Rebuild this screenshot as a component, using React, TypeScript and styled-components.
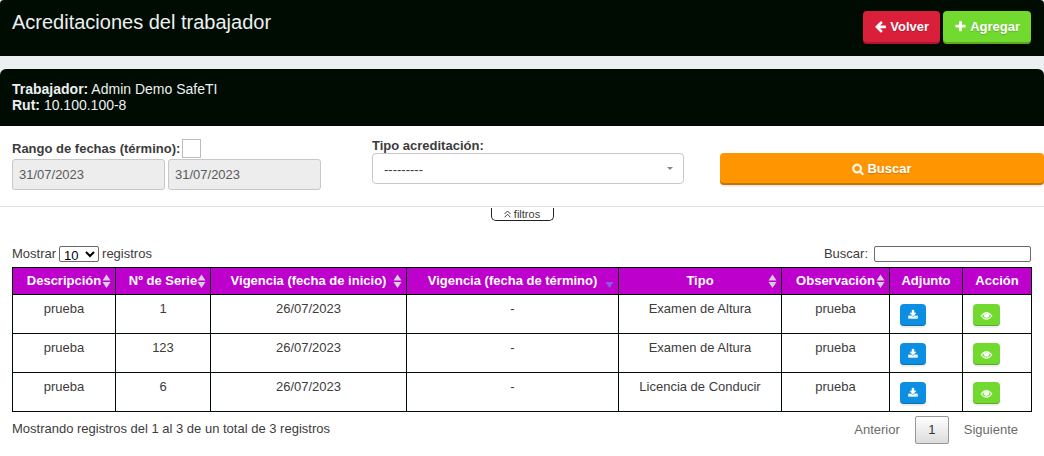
import React from "react";
import styled, { createGlobalStyle, css } from "styled-components";

const GlobalStyle = createGlobalStyle`
  *, *::before, *::after { box-sizing: border-box; }
  body {
    margin: 0;
    background: #fff;
    color: #3c3c3c;
    font: 13px/16px "Liberation Sans", Arial, sans-serif;
  }
  button, input, select { font-family: inherit; font-size: 13px; }
`;

const Page = styled.main`
  background: #ecf0f1;
  display: flex;
  flex-direction: column;
  gap: 13px;
`;

const headerBlock = css`
  background: #000b02;
  color: #ecf0f1;
  padding: 11px 12px;
`;

const TitleBar = styled.header`
  ${headerBlock}
  border-radius: 4px 4px 0 0;
  padding-right: 13px;
  display: flex;
  justify-content: space-between;
  align-items: flex-start;
  min-height: 56px;
`;

const Title = styled.h1`
  margin: 0;
  font-size: 20px;
  line-height: 22px;
  font-weight: normal;
`;

const ButtonGroup = styled.div`
  display: flex;
  gap: 3px;
`;

const tones = {
  red: "#da1f3b",
  green: "#72d92f",
  orange: "#ff9500",
  blue: "#0c8fe2",
};

const Button = styled.button<{ $tone: keyof typeof tones; $block?: boolean; $small?: boolean }>`
  display: inline-flex;
  align-items: center;
  justify-content: center;
  gap: 3px;
  width: ${(p) => (p.$block ? "100%" : "auto")};
  height: ${(p) => (p.$small ? "22px" : p.$block ? "32px" : "33px")};
  padding: ${(p) => (p.$small ? "0 8px" : p.$block ? "0 11px" : "0 11px 2px")};
  border: 0;
  border-radius: 4px;
  background: ${(p) => tones[p.$tone]};
  color: #fff;
  font-weight: bold;
  line-height: 16px;
  text-shadow: 0 1px 1px rgba(0, 0, 0, 0.2);
  box-shadow: inset 0 ${(p) => (p.$small ? "-1px" : "-2px")} 0 rgba(0, 0, 0, 0.22),
    0 2px 1px rgba(0, 0, 0, 0.07);
  cursor: pointer;
`;

const Panel = styled.section`
  background: #fff;
`;

const WorkerInfo = styled.header`
  ${headerBlock}
  border-radius: 6px 6px 0 0;
  padding-top: 12px;
  padding-bottom: 13px;
  font-size: 14px;
`;

/* The rounded corners of the worker header show the page colour behind them. */
const WorkerWrap = styled.div`
  background: #ecf0f1;
`;

const Filters = styled.form`
  display: grid;
  grid-template-columns: 30fr 29fr 27fr;
  padding: 12px 0 16px 12px;
  border-bottom: 1px solid #e2e2e2;
`;

const Field = styled.div`
  padding-right: 36px;
`;

const FieldLabel = styled.label`
  display: block;
  font-weight: bold;
  line-height: 15px;
`;

const CheckLabel = styled.label`
  display: flex;
  align-items: center;
  gap: 2px;
  height: 21px;
  font-weight: bold;
  line-height: 16px;
`;

const Checkbox = styled.input`
  appearance: none;
  width: 19px;
  height: 19px;
  margin: 0;
  border: 1px solid #bdbdc0;
  background: #fff;
`;

const DateRow = styled.div`
  display: flex;
  gap: 3px;
`;

const DateInput = styled.input`
  flex: 0 1 153px;
  min-width: 0;
  height: 31px;
  padding: 0 6px;
  border: 1px solid #c8c8c8;
  border-radius: 3px;
  background: #ededed;
  color: #5a5a5a;
`;

const SelectBox = styled.div`
  display: grid;
  align-items: center;
  & > * { grid-area: 1 / 1; }
  & > svg { justify-self: end; margin-right: 11px; pointer-events: none; }
`;

const TypeSelect = styled.select`
  appearance: none;
  width: 100%;
  height: 31px;
  padding: 2px 11px 0;
  border: 1px solid #c8c8c8;
  border-radius: 4px;
  background: #fff;
  color: #3c3c3c;
`;

const Submit = styled.div`
  padding-top: 15px;
`;

const TabRow = styled.div`
  display: flex;
  justify-content: center;
  padding-top: 1px;
`;

const FilterTab = styled.button`
  display: flex;
  align-items: center;
  justify-content: center;
  gap: 3px;
  width: 63px;
  height: 13px;
  padding: 0;
  border: 1px solid #222;
  border-top: 0;
  border-radius: 0 0 5px 5px;
  background: #fff;
  color: #3c3c3c;
  && { font-size: 11px; }
  line-height: 12px;
`;

const Records = styled.div`
  padding: 25px 12px 12px;
`;

const Bar = styled.div`
  display: flex;
  justify-content: space-between;
  align-items: center;
  padding-right: 1px;
`;

const InlineLabel = styled.label<{ $gap: number }>`
  display: flex;
  align-items: center;
  gap: ${(p) => p.$gap}px;
`;

const LengthSelect = styled.select`
  width: 40px;
  height: 16px;
  color: #000;
  padding: 0;
  line-height: 14px;
  border: 1px solid #6b6b6b;
  border-radius: 2px;
  background: #fff;
`;

const SearchInput = styled.input`
  width: 157px;
  height: 16px;
  padding: 0 2px;
  border: 1px solid #6b6b6b;
  border-radius: 2px;
`;

const Table = styled.table`
  width: 100%;
  margin-top: 5px;
  border-collapse: collapse;
  table-layout: fixed;
`;

const Th = styled.th<{ $sortable?: boolean }>`
  height: 27px;
  padding: ${(p) => (p.$sortable ? "0 12px" : "0")};
  border: 1px solid #000b02;
  background: #be00cd;
  color: #fff;
  position: relative;
  white-space: nowrap;
`;

const SortMark = styled.svg`
  position: absolute;
  right: 4px;
  top: 6px;
`;

const Td = styled.td<{ $action?: boolean }>`
  height: 39px;
  padding: ${(p) => (p.$action ? "9px 10px 7px" : "6px 10px")};
  border: 1px solid #000b02;
  text-align: ${(p) => (p.$action ? "left" : "center")};
  vertical-align: top;
  & > button { vertical-align: top; }
`;

const Footer = styled(Bar)`
  align-items: flex-start;
  padding-top: 4px;
`;

const Info = styled.p`
  margin: 5px 0 0;
`;

const Pager = styled.nav`
  display: flex;
  gap: 2px;
`;

const PageButton = styled.button<{ $current?: boolean }>`
  min-width: 34px;
  height: 28px;
  padding: 0 12px 1px;
  border: 1px solid ${(p) => (p.$current ? "#979797" : "transparent")};
  border-radius: 2px;
  background: ${(p) => (p.$current ? "linear-gradient(#fff, #dcdcdc)" : "transparent")};
  color: ${(p) => (p.$current ? "#333" : "#6b6b6b")};
`;

const paths = {
  back: "M1664 896v128q0 53-32.5 90.5t-84.5 37.5h-704l293 294q38 36 38 90t-38 90l-75 76q-37 37-90 37-52 0-91-37l-651-652q-37-37-37-90 0-52 37-91l651-650q38-38 91-38 52 0 90 38l75 74q38 38 38 91t-38 91l-293 293h704q52 0 84.5 37.5t32.5 90.5z",
  plus: "M1600 736v192q0 40-28 68t-68 28h-416v416q0 40-28 68t-68 28h-192q-40 0-68-28t-28-68v-416h-416q-40 0-68-28t-28-68v-192q0-40 28-68t68-28h416v-416q0-40 28-68t68-28h192q40 0 68 28t28 68v416h416q40 0 68 28t28 68z",
  search: "M1216 832q0-185-131.5-316.5t-316.5-131.5-316.5 131.5-131.5 316.5 131.5 316.5 316.5 131.5 316.5-131.5 131.5-316.5zm512 832q0 52-38 90t-90 38q-54 0-90-38l-343-342q-179 124-399 124-143 0-273.5-55.5t-225-150-150-225-55.5-273.5 55.5-273.5 150-225 225-150 273.5-55.5 273.5 55.5 225 150 150 225 55.5 273.5q0 220-124 399l343 343q37 37 37 90z",
  download: "M1344 1344q0-26-19-45t-45-19-45 19-19 45 19 45 45 19 45-19 19-45zm256 0q0-26-19-45t-45-19-45 19-19 45 19 45 45 19 45-19 19-45zm128-224v320q0 40-28 68t-68 28h-1472q-40 0-68-28t-28-68v-320q0-40 28-68t68-28h465l135 136q58 56 136 56t136-56l136-136h464q40 0 68 28t28 68zm-325-569q17 41-14 70l-448 448q-18 19-45 19t-45-19l-448-448q-31-29-14-70 17-39 59-39h256v-448q0-26 19-45t45-19h256q26 0 45 19t19 45v448h256q42 0 59 39z",
  eye: "M1664 960q-152-236-381-353 61 104 61 225 0 185-131.5 316.5t-316.5 131.5-316.5-131.5-131.5-316.5q0-121 61-225-229 117-381 353 133 205 333.5 326.5t434.5 121.5 434.5-121.5 333.5-326.5zm-720-384q0-20-14-34t-34-14q-125 0-214.5 89.5t-89.5 214.5q0 20 14 34t34 14 34-14 14-34q0-86 61-147t147-61q20 0 34-14t14-34zm848 384q0 34-20 69-140 230-376.5 368.5t-499.5 138.5-499.5-139-376.5-368q-20-35-20-69t20-69q140-229 376.5-368t499.5-139 499.5 139 376.5 368q20 35 20 69z",
};

const Icon = ({ name, size = 13 }: { name: keyof typeof paths; size?: number }) => (
  <svg
    width={size}
    height={size}
    viewBox="0 0 1792 1792"
    fill="currentColor"
    stroke="currentColor"
    strokeWidth={name === "back" || name === "plus" ? 0 : 60}
    overflow="visible"
    aria-hidden="true"
  >
    <path d={paths[name]} />
  </svg>
);

const SortIcon = ({ state }: { state: "both" | "desc" }) => (
  <SortMark width="9" height="15" viewBox="0 0 9 15" aria-hidden="true">
    {state === "both" && <path d="M4.5 0.5L8.5 6.5h-8z" fill="#d4d0dc" />}
    <path d="M0.5 8h8L4.5 14z" fill={state === "both" ? "#d4d0dc" : "#8a5ce0"} />
  </SortMark>
);

type Column = { title: string; width: number; sort?: "both" | "desc" };

const columns: Column[] = [
  { title: "Descripción", width: 103, sort: "both" },
  { title: "Nº de Serie", width: 95, sort: "both" },
  { title: "Vigencia (fecha de inicio)", width: 196, sort: "both" },
  { title: "Vigencia (fecha de término)", width: 212, sort: "desc" },
  { title: "Tipo", width: 163, sort: "both" },
  { title: "Observación", width: 108, sort: "both" },
  { title: "Adjunto", width: 73 },
  { title: "Acción", width: 69 },
];

const rows = [
  ["prueba", "1", "26/07/2023", "-", "Examen de Altura", "prueba"],
  ["prueba", "123", "26/07/2023", "-", "Examen de Altura", "prueba"],
  ["prueba", "6", "26/07/2023", "-", "Licencia de Conducir", "prueba"],
];

export default function App() {
  return (
    <>
      <GlobalStyle />
      <Page>
        <TitleBar>
          <Title>Acreditaciones del trabajador</Title>
          <ButtonGroup>
            <Button type="button" $tone="red"><Icon name="back" />Volver</Button>
            <Button type="button" $tone="green"><Icon name="plus" />Agregar</Button>
          </ButtonGroup>
        </TitleBar>

        <Panel>
          <WorkerWrap>
            <WorkerInfo>
              <div><b>Trabajador:</b> Admin Demo SafeTI</div>
              <div><b>Rut:</b> 10.100.100-8</div>
            </WorkerInfo>
          </WorkerWrap>

          <Filters onSubmit={(e) => e.preventDefault()}>
            <Field>
              <CheckLabel>
                Rango de fechas (término):
                <Checkbox type="checkbox" />
              </CheckLabel>
              <DateRow>
                <DateInput aria-label="Fecha desde" defaultValue="31/07/2023" readOnly />
                <DateInput aria-label="Fecha hasta" defaultValue="31/07/2023" readOnly />
              </DateRow>
            </Field>
            <Field>
              <FieldLabel htmlFor="tipo">Tipo acreditación:</FieldLabel>
              <SelectBox>
                <TypeSelect id="tipo">
                  <option>---------</option>
                </TypeSelect>
                <svg width="6" height="3" viewBox="0 0 6 3" aria-hidden="true">
                  <path d="M0 0h6L3 3z" fill="#888" />
                </svg>
              </SelectBox>
            </Field>
            <Submit>
              <Button type="submit" $tone="orange" $block><Icon name="search" size={12} />Buscar</Button>
            </Submit>
          </Filters>
          <TabRow>
            <FilterTab type="button">
              <svg width="7" height="8" viewBox="0 0 7 8" fill="none" stroke="currentColor" aria-hidden="true">
                <path d="M0.5 4L3.5 1l3 3M0.5 7.3l3-3 3 3" />
              </svg>
              filtros
            </FilterTab>
          </TabRow>

          <Records>
            <Bar>
              <InlineLabel $gap={3}>
                Mostrar
                <LengthSelect defaultValue="10">
                  <option>10</option>
                  <option>25</option>
                  <option>50</option>
                </LengthSelect>
                registros
              </InlineLabel>
              <InlineLabel $gap={6}>
                Buscar:
                <SearchInput type="search" />
              </InlineLabel>
            </Bar>
            <Table>
              <colgroup>
                {columns.map((c) => <col key={c.title} width={c.width} />)}
              </colgroup>
              <thead>
                <tr>
                  {columns.map((c) => (
                    <Th key={c.title} $sortable={!!c.sort} scope="col">
                      {c.title}
                      {c.sort && <SortIcon state={c.sort} />}
                    </Th>
                  ))}
                </tr>
              </thead>
              <tbody>
                {rows.map((row, i) => (
                  <tr key={i}>
                    {row.map((cell, j) => <Td key={j}>{cell}</Td>)}
                    <Td $action>
                      <Button type="button" $tone="blue" $small aria-label="Descargar"><Icon name="download" size={10} /></Button>
                    </Td>
                    <Td $action>
                      <Button type="button" $tone="green" $small aria-label="Ver"><Icon name="eye" size={11} /></Button>
                    </Td>
                  </tr>
                ))}
              </tbody>
            </Table>
            <Footer>
              <Info>Mostrando registros del 1 al 3 de un total de 3 registros</Info>
              <Pager aria-label="Paginación">
                <PageButton type="button">Anterior</PageButton>
                <PageButton type="button" $current>1</PageButton>
                <PageButton type="button">Siguiente</PageButton>
              </Pager>
            </Footer>
          </Records>
        </Panel>
      </Page>
    </>
  );
}
